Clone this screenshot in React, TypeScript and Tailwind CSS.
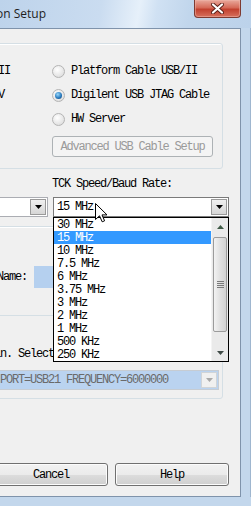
import React from 'react';

const mono = "font-['Liberation_Mono',monospace] text-[12px] tracking-[-1.2px] leading-none whitespace-nowrap";

const speeds = ['30 MHz', '15 MHz', '10 MHz', '7.5 MHz', '6 MHz', '3.75 MHz', '3 MHz', '2 MHz', '1 MHz', '500 KHz', '250 KHz'];

function Radio({ checked }: { checked?: boolean }) {
  return (
    <span className="w-[13px] h-[13px] rounded-full border border-[#b4b4b4] bg-[radial-gradient(circle_at_40%_35%,#ffffff,#e2e2e2_70%,#d4d4d4)] flex items-center justify-center shrink-0">
      {checked && (
        <span className="w-[7px] h-[7px] rounded-full bg-[radial-gradient(circle_at_40%_35%,#9ad8fa,#2a7cc0_55%,#0e3a66)]" />
      )}
    </span>
  );
}

function Arrow({ color = '#000' }: { color?: string }) {
  return (
    <svg width="7" height="4" viewBox="0 0 7 4">
      <path d="M0 0H7L3.5 4Z" fill={color} />
    </svg>
  );
}

function ComboButton() {
  return (
    <div className="w-[16px] my-[1px] mr-[1px] border border-[#9a9a9a] bg-gradient-to-b from-[#f0f0f0] to-[#d6d6d6] flex items-center justify-center">
      <Arrow />
    </div>
  );
}

function Button({ label, className }: { label: string; className: string }) {
  return (
    <div className={`h-[23px] rounded-[3px] border border-[#707070] bg-[linear-gradient(#f2f2f2_0%,#ebebeb_50%,#dddddd_51%,#cfcfcf_100%)] shadow-[inset_0_0_0_1px_#fcfcfc] flex items-center justify-center ${className}`}>
      <span className={`${mono} text-black`}>{label}</span>
    </div>
  );
}

export default function App() {
  return (
    <div className="relative w-[251px] h-[506px] overflow-hidden bg-[#c3d7ec] flex flex-col">
      {/* title bar */}
      <div className="h-[28px] shrink-0 flex items-start bg-[linear-gradient(100deg,#bdd3eb_0%,#cadcf0_40%,#e6f0fa_55%,#d0e1f3_62%,#c1d6ec_75%,#bcd2ea_100%)]">
        <div className="w-[46px] h-[27px] flex items-center justify-end overflow-visible">
          <span className="font-['Open_Sans',sans-serif] text-[12px] text-[#1e1e1e] whitespace-nowrap">Cable Communication Setup</span>
        </div>
        <div className="ml-auto mr-[10px] w-[47px] h-[18px] rounded-b-[4px] border border-t-0 border-[#7e3a31] bg-[linear-gradient(#e9a99c_0%,#d56a58_45%,#c2412f_55%,#d7705d_100%)] shadow-[inset_0_0_0_1px_#f0b8ac80] flex items-center justify-center">
          <svg width="13" height="11" viewBox="0 0 13 11">
            <path d="M2 1.5L11 9.5M11 1.5L2 9.5" stroke="#5a2018" strokeWidth="4" strokeLinecap="round" />
            <path d="M2 1.5L11 9.5M11 1.5L2 9.5" stroke="#ffffff" strokeWidth="2.2" strokeLinecap="round" />
          </svg>
        </div>
      </div>

      <div className="flex">
        {/* client area */}
        <div className="w-[241px] h-[469px] shrink-0 bg-[#f0f0f0] border-t border-r border-b border-[#7f93ab] flex flex-col">
          {/* communication mode group */}
          <div className="mt-[14px] ml-[-20px] w-[243px] h-[126px] shrink-0 rounded-[3px] border border-[#d5dfe5] shadow-[inset_1px_1px_0_#ffffff] flex">
            <div className="w-[71px] pt-[15px] flex flex-col">
              <div className="h-[24px] flex items-center ml-[-43px]">
                <span className={`${mono} text-black`}>Parallel III</span>
              </div>
              <div className="h-[24px] flex items-center ml-[-43px]">
                <span className={`${mono} text-black`}>Parallel IV</span>
              </div>
            </div>
            <div className="pt-[15px] flex flex-col">
              <div className="h-[24px] flex items-center gap-[6px]">
                <Radio />
                <span className={`${mono} text-black`}>Platform Cable USB/II</span>
              </div>
              <div className="h-[24px] flex items-center gap-[6px]">
                <Radio checked />
                <span className={`${mono} text-black`}>Digilent USB JTAG Cable</span>
              </div>
              <div className="h-[24px] flex items-center gap-[6px]">
                <Radio />
                <span className={`${mono} text-black`}>HW Server</span>
              </div>
              <div className="mt-[5px] w-[161px] h-[21px] rounded-[3px] border border-[#adb2b5] bg-[#f4f4f4] flex items-center justify-center">
                <span className={`${mono} text-[#9a9a9a]`}>Advanced USB Cable Setup</span>
              </div>
            </div>
          </div>

          {/* port / speed row */}
          <div className="mt-[8px] flex shrink-0">
            <div className="ml-[-20px] w-[73px] flex flex-col">
              <div className="h-[14px]" />
              <div className="mt-[6px] w-[68px] h-[20px] border border-[#abadb3] bg-white flex justify-end">
                <ComboButton />
              </div>
            </div>
            <div className="w-[176px] flex flex-col">
              <div className="h-[14px] flex items-center">
                <span className={`${mono} text-black -ml-[1px]`}>TCK Speed/Baud Rate:</span>
              </div>
              <div className="relative mt-[6px] h-[20px] border border-[#7a7a7a] bg-white flex">
                <div className="flex-1 flex items-center pl-[3px]">
                  <span className={`${mono} text-black`}>15 MHz</span>
                </div>
                <ComboButton />

                {/* open drop-down list */}
                <div className="absolute left-[-1px] top-[19px] w-[176px] h-[145px] z-10 border border-black bg-white flex">
                  <div className="flex-1 flex flex-col">
                    {speeds.map(s => (
                      <div
                        key={s}
                        className={`h-[13px] flex items-center pl-[3px] ${s === '15 MHz' ? 'bg-[#3399ff] text-white' : 'text-black'}`}
                      >
                        <span className={mono}>{s}</span>
                      </div>
                    ))}
                  </div>
                  <div className="w-[17px] bg-[#eaeaea] border-l border-[#f4f4f4] flex flex-col">
                    <div className="h-[17px] flex items-center justify-center">
                      <svg width="7" height="4" viewBox="0 0 7 4"><path d="M0 4H7L3.5 0Z" fill="#3f5a46" /></svg>
                    </div>
                    <div className="mx-[1px] mt-[2px] h-[95px] rounded-[2px] border border-[#9b9b9b] bg-[linear-gradient(90deg,#f2f2f2,#e0e0e0_50%,#d2d2d2)] flex flex-col items-center justify-center gap-[1px]">
                      <span className="w-[7px] h-px bg-[#7a7a7a]" />
                      <span className="w-[7px] h-px bg-[#7a7a7a]" />
                      <span className="w-[7px] h-px bg-[#7a7a7a]" />
                      <span className="w-[7px] h-px bg-[#7a7a7a]" />
                    </div>
                    <div className="mt-auto h-[17px] flex items-center justify-center">
                      <Arrow color="#3f4a46" />
                    </div>
                  </div>
                </div>
              </div>
            </div>
          </div>

          {/* plug-in group */}
          <div className="mt-[9px] ml-[-20px] w-[243px] h-[173px] shrink-0 rounded-[3px] border border-[#d5dfe5] shadow-[inset_1px_1px_0_#ffffff] flex flex-col">
            <div className="mt-[39px] h-[22px] flex items-center">
              <span className={`${mono} text-black ml-[16px]`}>Name:</span>
              <div className="ml-[7px] w-[180px] h-[22px] bg-[#b5d0ef]" />
            </div>
            <div className="mt-[27px] w-[230px] h-px bg-[#d5dfe5]" />
            <div className="mt-[31px] h-[14px] flex items-center">
              <span className={`${mono} text-black ml-[-17px]`}>Plug-in. Select</span>
            </div>
            <div className="mt-[9px] ml-[15px] w-[223px] h-[20px] border border-[#c6ccd3] bg-[#bad3f0] flex">
              <div className="flex-1 flex items-center pl-[3px]">
                <span className={`${mono} text-[#6a6a6a]`}>PORT=USB21 FREQUENCY=6000000</span>
              </div>
              <div className="w-[16px] my-[1px] mr-[1px] border border-[#d0d4d8] bg-[#f0f0f0] flex items-center justify-center">
                <Arrow color="#a8a8a8" />
              </div>
            </div>
          </div>

          {/* buttons */}
          <div className="mt-[64px] flex">
            <Button label="Cancel" className="ml-[-6px] w-[114px]" />
            <Button label="Help" className="ml-[7px] w-[114px]" />
          </div>
        </div>
        <div className="flex-1 border-r border-[#9fb6cf] bg-[#c3d7ec]" />
      </div>

      {/* mouse pointer */}
      <svg className="absolute left-[95px] top-[203px] z-20" width="13" height="20" viewBox="0 0 13 20">
        <path d="M0.5 0.5V16.5L4.5 12.8L7.2 18.8L9.6 17.8L7 11.9H12Z" fill="#ffffff" stroke="#000000" strokeWidth="1" strokeLinejoin="round" />
      </svg>
    </div>
  );
}
